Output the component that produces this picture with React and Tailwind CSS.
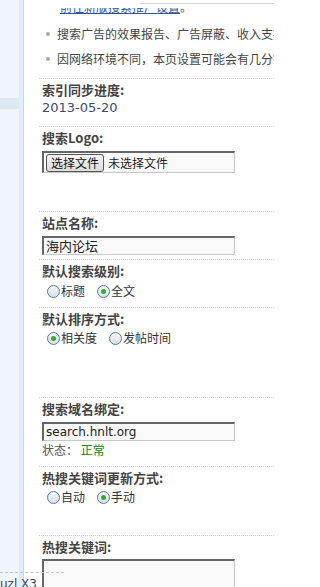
import React from "react";

const font = { fontFamily: '"Noto Sans CJK SC", "Liberation Sans", sans-serif' };

function Radio({ checked, label }) {
  return (
    <span className="flex items-center mr-[12px]">
      <span className="w-[13px] h-[13px] rounded-full border border-[#5a7a9e] bg-gradient-to-b from-[#f4f6f8] to-[#d8e0e8] flex items-center justify-center">
        {checked && <span className="w-[5px] h-[5px] rounded-full bg-[#2fae2f]" />}
      </span>
      <span className="ml-[1px] text-[12px] text-[#333]">{label}</span>
    </span>
  );
}

function Label({ children }) {
  return (
    <div className="pt-[2px] h-[20px] leading-[18px] text-[13px] font-bold text-[#444]">
      {children}
    </div>
  );
}

function Input({ value, mono }) {
  return (
    <div
      className="w-[193px] h-[19px] border-t-2 border-l-2 border-[#666] border-b border-r border-b-[#c8c8c8] border-r-[#c8c8c8] bg-[#f9f9f9] pl-[2px] leading-[16px] text-[13px] text-[#222]"
      style={mono ? { fontFamily: '"DejaVu Sans", sans-serif', fontSize: "12px" } : undefined}
    >
      {value}
    </div>
  );
}

function Section({ children, className }) {
  return (
    <div className={`border-t border-dotted border-[#c3dbee] pl-[3px] ${className || ""}`}>
      {children}
    </div>
  );
}

export default function App() {
  return (
    <div className="relative w-[274px] h-[587px] overflow-hidden bg-white flex" style={font}>
      {/* sidebar */}
      <div className="flex shrink-0">
        <div className="w-[19px] bg-[#eef5fb] flex flex-col">
          <div className="h-[98px]" />
          <div className="h-[11px] bg-[#dbe9f5]" />
        </div>
        <div className="w-[4px] bg-[#e0edf8]" />
        <div className="w-px bg-[#c4d8ea]" />
      </div>

      {/* main */}
      <div className="flex-1 pl-[15px] min-w-0">
        <div className="relative h-[15px] overflow-hidden pl-[21px] text-[12px]">
          <div className="mt-[-2px] leading-[18px] text-[#555] whitespace-nowrap">
            <span className="text-[#2a55a0] underline">前往新版搜索推广设置</span>。
          </div>
          <div className="absolute left-0 right-0 top-0 h-[8px] bg-white" />
        </div>

        <ul className="mt-[6px] pl-[7px] text-[12px] text-[#444] leading-[25px] whitespace-nowrap">
          <li className="flex items-center">
            <span className="shrink-0 w-[4px] h-[4px] rounded-full bg-[#aaa] mr-[7px]" />
            搜索广告的效果报告、广告屏蔽、收入支持
          </li>
          <li className="flex items-center">
            <span className="shrink-0 w-[4px] h-[4px] rounded-full bg-[#aaa] mr-[7px]" />
            因网络环境不同，本页设置可能会有几分钟
          </li>
        </ul>

        <Section className="mt-[7px]">
          <Label>索引同步进度:</Label>
          <div
            className="h-[18px] leading-[18px] text-[13px] text-[#3b4a6e]"
            style={{ fontFamily: '"DejaVu Sans", sans-serif' }}
          >
            2013-05-20
          </div>
          <div className="h-[9px]" />
        </Section>

        <Section>
          <Label>搜索Logo:</Label>
          <div className="mt-[4px] w-[193px] h-[22px] border-t-2 border-l-2 border-[#666] border-b border-r border-b-[#c8c8c8] border-r-[#c8c8c8] bg-[#f9f9f9] flex items-center pl-[2px]">
            <span className="h-[18px] px-[4px] rounded-[3px] border border-[#555] bg-gradient-to-b from-[#f6f6f6] to-[#dcdcdc] text-[12px] leading-[16px] text-[#111]">
              选择文件
            </span>
            <span className="ml-[4px] text-[12px] text-[#222]">未选择文件</span>
          </div>
          <div className="h-[38px]" />
        </Section>

        <Section>
          <Label>站点名称:</Label>
          <div className="mt-[4px]">
            <Input value="海内论坛" />
          </div>
          <div className="h-[4px]" />
        </Section>

        <Section>
          <Label>默认搜索级别:</Label>
          <div className="flex items-center h-[18px] pl-[5px] mt-[2px]">
            <Radio label="标题" />
            <Radio checked label="全文" />
          </div>
          <div className="h-[7px]" />
        </Section>

        <Section>
          <Label>默认排序方式:</Label>
          <div className="flex items-center h-[18px] pl-[5px] mt-[1px]">
            <Radio checked label="相关度" />
            <Radio label="发帖时间" />
          </div>
          <div className="h-[50px]" />
        </Section>

        <Section>
          <Label>搜索域名绑定:</Label>
          <div className="mt-[4px]">
            <Input value="search.hnlt.org" mono />
          </div>
          <div className="h-[18px] leading-[18px] text-[12px] text-[#555]">
            状态： <span className="text-[#0a8a0a]">正常</span>
          </div>
          <div className="h-[7px]" />
        </Section>

        <Section>
          <Label>热搜关键词更新方式:</Label>
          <div className="flex items-center h-[18px] pl-[5px] mt-[1px]">
            <Radio label="自动" />
            <Radio checked label="手动" />
          </div>
          <div className="h-[29px]" />
        </Section>

        <Section>
          <Label>热搜关键词:</Label>
          <div className="mt-[3px] w-[193px] h-[80px] border-t-2 border-l-2 border-[#666] border-b border-r border-b-[#c8c8c8] border-r-[#c8c8c8] bg-[#f9f9f9]" />
        </Section>
      </div>

      {/* overlays */}
      <div className="absolute left-[140px] right-0 top-[3px] h-px bg-[#c9d8e4]" />
      <div className="absolute left-0 top-[572px] w-[64px] border-t border-dashed border-[#c8c8c8]" />
      <div
        className="absolute left-0 top-[577px] text-[12px] leading-[14px] text-[#3a4a6a]"
        style={{ fontFamily: '"DejaVu Sans", sans-serif' }}
      >
        uzl X3
      </div>
    </div>
  );
}
